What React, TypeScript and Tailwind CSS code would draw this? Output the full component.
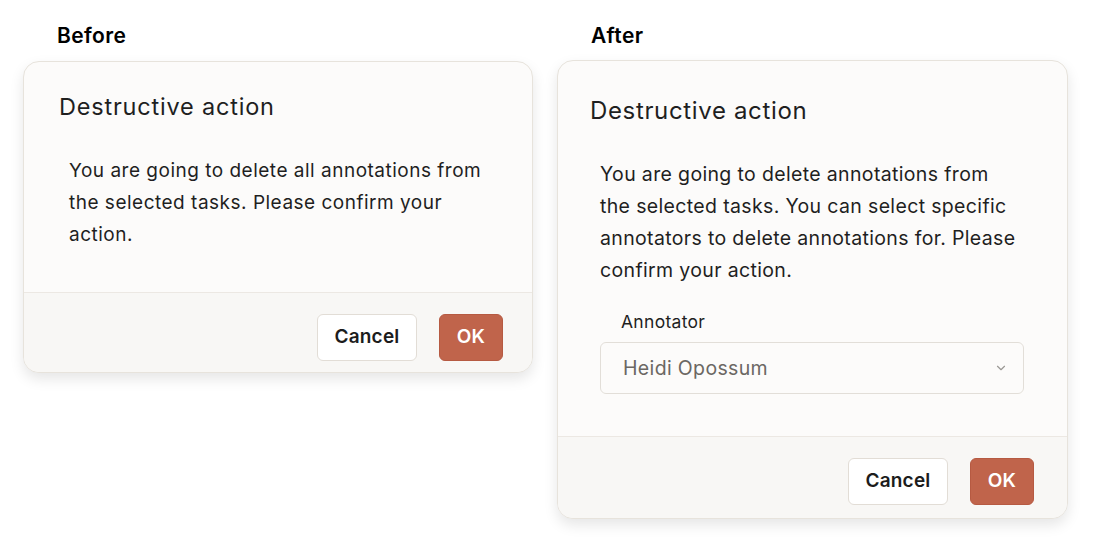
import React from 'react';
import { ChevronDown } from 'lucide-react';

const font = { fontFamily: 'Inter, "Noto Sans", sans-serif' };

function Footer({ pad }: { pad: string }) {
    return (
        <div className={`flex justify-end gap-[22px] border-t border-[#ece8e3] bg-[#f8f7f5] ${pad}`}>
            <button className="h-[47px] w-[100px] rounded-[6px] border border-[#e2ddd6] bg-white text-[19px] font-semibold tracking-[0.2px] text-[#1c1c1c]">
                Cancel
            </button>
            <button className="h-[47px] w-[64px] rounded-[6px] border border-[#b65a42] bg-[#c0644b] text-[19px] font-semibold tracking-[0.3px] text-white">
                OK
            </button>
        </div>
    );
}

function App() {
    return (
        <div className="flex h-[552px] w-[1100px] gap-[24px] bg-white pl-[23px] text-[#1f1f1f]" style={font}>
            {/* before */}
            <div className="flex w-[510px] flex-col">
                <p className="mt-[22px] ml-[34px] text-[21px] leading-[28px] font-semibold tracking-[0.4px] text-black">Before</p>
                <div className="mt-[11px] overflow-hidden rounded-[16px] border border-[#e7e3dc] bg-[#fcfbfa] shadow-[0_6px_14px_rgba(0,0,0,0.10)]">
                    <div className="h-[230px] pt-[29px]">
                        <h2 className="pl-[35px] text-[23.5px] leading-[32px] tracking-[0.8px]">Destructive action</h2>
                        <p className="mt-[32px] pl-[45px] text-[19px] leading-[32px] tracking-[0.5px]">
                            You are going to delete all annotations from
                            <br />
                            the selected tasks. Please confirm your
                            <br />
                            action.
                        </p>
                    </div>
                    <Footer pad="pt-[21px] pr-[29px] pb-[11px]" />
                </div>
            </div>

            {/* after */}
            <div className="flex w-[511px] flex-col">
                <p className="mt-[22px] ml-[34px] text-[21px] leading-[28px] font-semibold tracking-[0.4px] text-black">After</p>
                <div className="mt-[10px] overflow-hidden rounded-[16px] border border-[#e7e3dc] bg-[#fcfbfa] shadow-[0_6px_14px_rgba(0,0,0,0.10)]">
                    <div className="h-[375px] pt-[34px]">
                        <h2 className="pl-[32px] text-[24px] leading-[32px] tracking-[0.65px]">Destructive action</h2>
                        <p className="mt-[31px] pl-[42px] text-[19.5px] leading-[32px] tracking-[0.35px]">
                            You are going to delete annotations from
                            <br />
                            the selected tasks. You can select specific
                            <br />
                            annotators to delete annotations for. Please
                            <br />
                            confirm your action.
                        </p>
                        <label className="mt-[24px] block pl-[63px] text-[17.5px] leading-[24px] tracking-[0.3px]">Annotator</label>
                        <div className="mt-[8px] ml-[42px] flex h-[52px] w-[424px] items-center justify-between rounded-[6px] border border-[#e2ded8] bg-[#fcfbfa] pr-[15px] pl-[22px]">
                            <span className="pt-[2px] text-[19.5px] tracking-[0.35px] text-[#6b6763]">Heidi Opossum</span>
                            <ChevronDown size={14} strokeWidth={2} className="text-[#9b9894]" />
                        </div>
                    </div>
                    <Footer pad="pt-[21px] pr-[33px] pb-[13px]" />
                </div>
            </div>
        </div>
    );
}

export default App;
